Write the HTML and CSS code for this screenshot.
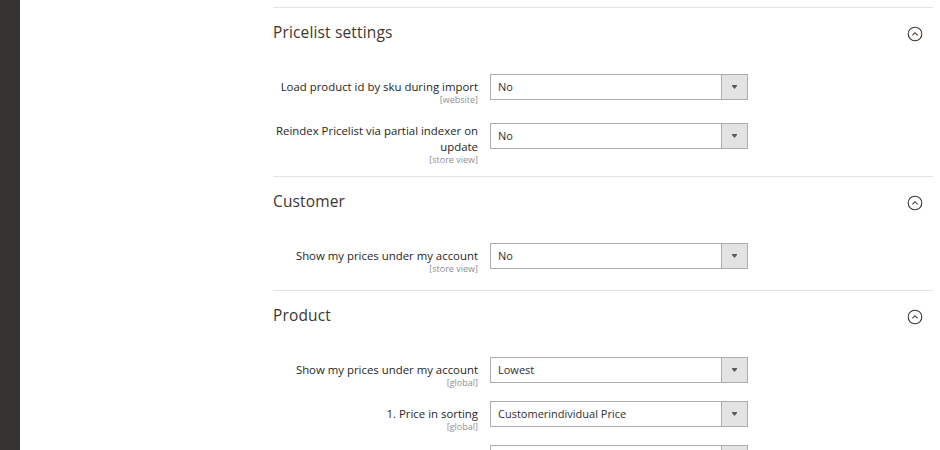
FILE: index.html
```html
<!DOCTYPE html>
<html lang="en">
<head>
<meta charset="utf-8">
<title>Configuration</title>
<link rel="stylesheet" href="styles.css">
</head>
<body>
<div class="page">
  <aside class="sidebar"></aside>
  <main class="content">
    <section class="section">
      <div class="section-head">
        <h2 class="section-title">Pricelist settings</h2>
        <span class="toggle"><svg width="16" height="16" viewBox="0 0 16 16"><circle cx="8" cy="8" r="6.8" fill="none" stroke="#41362f" stroke-width="1.1"/><path d="M5.4 9.3 L8 6.7 L10.6 9.3" fill="none" stroke="#41362f" stroke-width="1.1"/></svg></span>
      </div>
      <div class="fields">
        <div class="field">
          <div class="label"><span class="label-text">Load product id by sku during import</span><span class="scope">[website]</span></div>
          <div class="control"><div class="select"><span class="value">No</span><span class="arrow"><svg width="5" height="4" viewBox="0 0 5 4"><path d="M0 0 H5 V1 L2.5 4 L0 1 Z" fill="#5a5a5a"/></svg></span></div></div>
        </div>
        <div class="field field--multiline">
          <div class="label"><span class="label-text">Reindex Pricelist via partial indexer on update</span><span class="scope">[store view]</span></div>
          <div class="control"><div class="select"><span class="value">No</span><span class="arrow"><svg width="5" height="4" viewBox="0 0 5 4"><path d="M0 0 H5 V1 L2.5 4 L0 1 Z" fill="#5a5a5a"/></svg></span></div></div>
        </div>
      </div>
    </section>
    <section class="section">
      <div class="section-head">
        <h2 class="section-title">Customer</h2>
        <span class="toggle"><svg width="16" height="16" viewBox="0 0 16 16"><circle cx="8" cy="8" r="6.8" fill="none" stroke="#41362f" stroke-width="1.1"/><path d="M5.4 9.3 L8 6.7 L10.6 9.3" fill="none" stroke="#41362f" stroke-width="1.1"/></svg></span>
      </div>
      <div class="fields">
        <div class="field">
          <div class="label"><span class="label-text">Show my prices under my account</span><span class="scope">[store view]</span></div>
          <div class="control"><div class="select"><span class="value">No</span><span class="arrow"><svg width="5" height="4" viewBox="0 0 5 4"><path d="M0 0 H5 V1 L2.5 4 L0 1 Z" fill="#5a5a5a"/></svg></span></div></div>
        </div>
      </div>
    </section>
    <section class="section">
      <div class="section-head">
        <h2 class="section-title">Product</h2>
        <span class="toggle"><svg width="16" height="16" viewBox="0 0 16 16"><circle cx="8" cy="8" r="6.8" fill="none" stroke="#41362f" stroke-width="1.1"/><path d="M5.4 9.3 L8 6.7 L10.6 9.3" fill="none" stroke="#41362f" stroke-width="1.1"/></svg></span>
      </div>
      <div class="fields">
        <div class="field">
          <div class="label"><span class="label-text">Show my prices under my account</span><span class="scope">[global]</span></div>
          <div class="control"><div class="select"><span class="value">Lowest</span><span class="arrow"><svg width="5" height="4" viewBox="0 0 5 4"><path d="M0 0 H5 V1 L2.5 4 L0 1 Z" fill="#5a5a5a"/></svg></span></div></div>
        </div>
        <div class="field">
          <div class="label"><span class="label-text">1. Price in sorting</span><span class="scope">[global]</span></div>
          <div class="control"><div class="select"><span class="value">Customerindividual Price</span><span class="arrow"><svg width="5" height="4" viewBox="0 0 5 4"><path d="M0 0 H5 V1 L2.5 4 L0 1 Z" fill="#5a5a5a"/></svg></span></div></div>
        </div>
        <div class="field">
          <div class="label"></div>
          <div class="control"><div class="select"><span class="value"></span><span class="arrow"></span></div></div>
        </div>
      </div>
    </section>
  </main>
</div>
</body>
</html>
```

FILE: styles.css
```css
html, body {
  margin: 0;
  padding: 0;
  background: #ffffff;
  font-family: "Open Sans", "DejaVu Sans", sans-serif;
  overflow: hidden;
}

.page {
  display: flex;
  min-height: 100vh;
}

.sidebar {
  flex: none;
  width: 20px;
  background: #373330;
}

.content {
  flex: none;
  width: 660px;
  margin-left: 253px;
  padding-top: 7px;
}

.section {
  border-top: 1px solid #e3e3e3;
  padding-bottom: 3px;
}

.section-head {
  display: flex;
  align-items: center;
  justify-content: space-between;
  height: 48px;
}

.section-title {
  margin: 0;
  font-size: 15.5px;
  font-weight: 400;
  color: #41362f;
  letter-spacing: 0.15px;
}

.toggle {
  display: flex;
  margin-right: 10px;
  margin-top: 4px;
}

.fields {
  padding-top: 18px;
}

.field {
  display: grid;
  grid-template-columns: 205px 258px;
  column-gap: 12px;
  align-items: start;
  padding-bottom: 13px;
}

.field--multiline {
  padding-bottom: 8px;
}

.field--multiline .control {
  padding-top: 5px;
}

.label {
  text-align: right;
  padding-top: 5px;
  color: #262626;
}

.label-text {
  display: block;
  font-size: 11.4px;
  font-weight: 400;
  line-height: 16px;
}

.scope {
  display: block;
  font-size: 9px;
  line-height: 10px;
  color: #8f8f8f;
}

.select {
  display: flex;
  box-sizing: border-box;
  width: 258px;
  height: 26px;
  border: 1px solid #adadad;
  background: #ffffff;
}

.value {
  flex: 1;
  padding-left: 7px;
  font-size: 11px;
  line-height: 24px;
  color: #303030;
}

.arrow {
  flex: none;
  box-sizing: border-box;
  width: 26px;
  border-left: 1px solid #adadad;
  background: #e3e3e3;
  display: flex;
  align-items: center;
  justify-content: center;
}
```
